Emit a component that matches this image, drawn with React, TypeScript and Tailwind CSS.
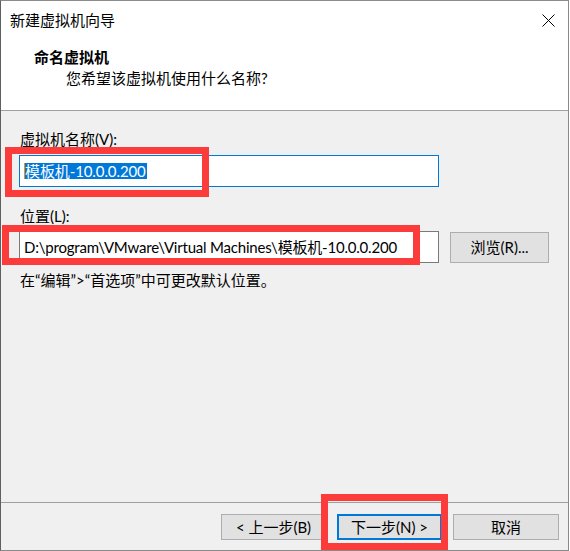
const font = "font-['Lato','Noto_Sans_CJK_SC',sans-serif]";

function Button({
  children,
  primary = false,
  width = "w-[105px]",
}: {
  children: React.ReactNode;
  primary?: boolean;
  width?: string;
}) {
  return (
    <div
      className={`flex h-[26px] ${width} items-center justify-center bg-[#e1e1e1] text-[15px] leading-[20px] text-black ${
        primary ? "border-2 border-[#0078d7]" : "border border-[#adadad]"
      }`}
    >
      {children}
    </div>
  );
}

export default function App() {
  return (
    <div className={`${font} relative h-[551px] w-[569px] bg-white text-black`}>
      <div className="flex h-full w-full flex-col border border-l-[#5f5f5f] border-t-[#8c8c8c] border-r-[#8a8a8a] border-b-[#8a8a8a]">
        {/* title bar */}
        <div className="flex h-[38px] shrink-0 items-center justify-between pl-[9px] pr-[13px]">
          <span className="text-[15px] leading-[20px]">新建虚拟机向导</span>
          <svg width="13" height="13" viewBox="0 0 13 13">
            <path d="M0.5 0.5 L12.5 12.5 M12.5 0.5 L0.5 12.5" stroke="#000" strokeWidth="1" />
          </svg>
        </div>

        {/* header */}
        <div className="h-[72px] shrink-0 border-b border-[#a0a0a0] pt-[8px]">
          <div className="pl-[33px] text-[15px] font-bold leading-[20px]">命名虚拟机</div>
          <div className="mt-[1px] pl-[65px] text-[15px] leading-[20px]">您希望该虚拟机使用什么名称?</div>
        </div>

        {/* body */}
        <div className="flex-1 bg-[#f0f0f0] pl-[18px] pt-[18px] text-[15px] leading-[20px]">
          <div className="pl-[1px]">虚拟机名称(V):</div>
          <div className="mt-[6px] flex h-[32px] w-[420px] items-center border border-[#0078d7] bg-white pl-[4px]">
            <span className="h-[16px] w-[1px] bg-[#ff8c00]" />
            <span className="flex h-[16px] items-center bg-[#0078d7] pr-[1px] tracking-[-0.1px] text-white">模板机-10.0.0.200</span>
          </div>

          <div className="mt-[19px] pl-[1px]">位置(L):</div>
          <div className="mt-[5px] flex items-center">
            <div className="flex h-[32px] w-[420px] items-center border border-[#7a7a7a] bg-white pl-[4px] tracking-[-0.2px]">
              D:\program\VMware\Virtual Machines\模板机-10.0.0.200
            </div>
            <div className="ml-[11px] flex h-[31px] w-[99px] items-center justify-center border border-[#adadad] bg-[#e1e1e1]">
              浏览(R)...
            </div>
          </div>

          <div className="mt-[7px] pl-[1px]">在“编辑”&gt;“首选项”中可更改默认位置。</div>
        </div>

        {/* footer */}
        <div className="flex h-[48px] shrink-0 justify-end gap-[11px] border-t border-[#a0a0a0] bg-[#f0f0f0] pr-[9px] pt-[11px]">
          <Button>&lt; 上一步(B)</Button>
          <Button primary>下一步(N) &gt;</Button>
          <Button width="w-[106px]">取消</Button>
        </div>
      </div>

      {/* red annotation boxes */}
      <div className="absolute left-[5px] top-[147px] h-[50px] w-[204px] border-[7px] border-[#fc3b3b]" />
      <div className="absolute left-[2px] top-[225px] h-[40px] w-[418px] border-[7px] border-[#fc3b3b]" />
      <div className="absolute left-[321px] top-[494px] h-[56px] w-[127px] border-[7px] border-[#fc3b3b]" />
    </div>
  );
}
